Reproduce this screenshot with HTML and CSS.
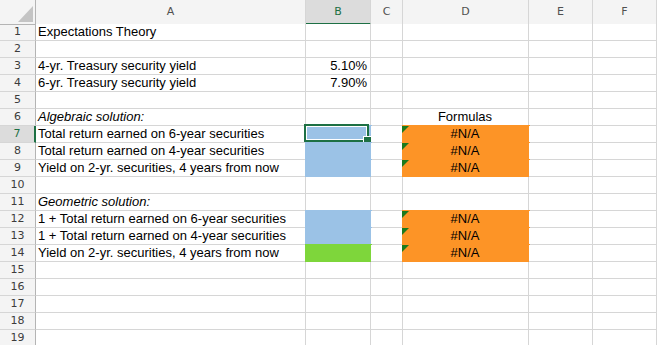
FILE: index.html
```html
<!DOCTYPE html>
<html lang="en">
<head>
    <meta charset="UTF-8">
    <meta name="viewport" content="width=device-width, initial-scale=1.0">
    <title>Expectations Theory</title>
    <link rel="stylesheet" href="styles.css">
</head>
<body>
    <div class="sheet">
        <div class="row head">
            <div class="corner"><span class="corner-mark"></span></div>
            <div class="col">A</div>
            <div class="col active">B</div>
            <div class="col">C</div>
            <div class="col">D</div>
            <div class="col">E</div>
            <div class="col">F</div>
        </div>
        <div class="row">
            <div class="num">1</div>
            <div class="cell">Expectations Theory</div>
            <div class="cell"></div><div class="cell"></div><div class="cell"></div><div class="cell"></div><div class="cell"></div>
        </div>
        <div class="row">
            <div class="num">2</div>
            <div class="cell"></div><div class="cell"></div><div class="cell"></div><div class="cell"></div><div class="cell"></div><div class="cell"></div>
        </div>
        <div class="row">
            <div class="num">3</div>
            <div class="cell">4-yr. Treasury security yield</div>
            <div class="cell right">5.10%</div>
            <div class="cell"></div><div class="cell"></div><div class="cell"></div><div class="cell"></div>
        </div>
        <div class="row">
            <div class="num">4</div>
            <div class="cell">6-yr. Treasury security yield</div>
            <div class="cell right">7.90%</div>
            <div class="cell"></div><div class="cell"></div><div class="cell"></div><div class="cell"></div>
        </div>
        <div class="row">
            <div class="num">5</div>
            <div class="cell"></div><div class="cell"></div><div class="cell"></div><div class="cell"></div><div class="cell"></div><div class="cell"></div>
        </div>
        <div class="row">
            <div class="num">6</div>
            <div class="cell italic">Algebraic solution:</div>
            <div class="cell"></div><div class="cell"></div>
            <div class="cell center">Formulas</div>
            <div class="cell"></div><div class="cell"></div>
        </div>
        <div class="row">
            <div class="num active">7</div>
            <div class="cell">Total return earned on 6-year securities</div>
            <div class="cell fill blue selected"></div>
            <div class="cell"></div>
            <div class="cell fill orange flag center">#N/A</div>
            <div class="cell"></div><div class="cell"></div>
        </div>
        <div class="row">
            <div class="num">8</div>
            <div class="cell">Total return earned on 4-year securities</div>
            <div class="cell fill blue"></div>
            <div class="cell"></div>
            <div class="cell fill orange flag center">#N/A</div>
            <div class="cell"></div><div class="cell"></div>
        </div>
        <div class="row">
            <div class="num">9</div>
            <div class="cell">Yield on 2-yr. securities, 4 years from now</div>
            <div class="cell fill blue"></div>
            <div class="cell"></div>
            <div class="cell fill orange flag center">#N/A</div>
            <div class="cell"></div><div class="cell"></div>
        </div>
        <div class="row">
            <div class="num">10</div>
            <div class="cell"></div><div class="cell"></div><div class="cell"></div><div class="cell"></div><div class="cell"></div><div class="cell"></div>
        </div>
        <div class="row">
            <div class="num">11</div>
            <div class="cell italic">Geometric solution:</div>
            <div class="cell"></div><div class="cell"></div><div class="cell"></div><div class="cell"></div><div class="cell"></div>
        </div>
        <div class="row">
            <div class="num">12</div>
            <div class="cell">1 + Total return earned on 6-year securities</div>
            <div class="cell fill blue"></div>
            <div class="cell"></div>
            <div class="cell fill orange flag center">#N/A</div>
            <div class="cell"></div><div class="cell"></div>
        </div>
        <div class="row">
            <div class="num">13</div>
            <div class="cell">1 + Total return earned on 4-year securities</div>
            <div class="cell fill blue"></div>
            <div class="cell"></div>
            <div class="cell fill orange flag center">#N/A</div>
            <div class="cell"></div><div class="cell"></div>
        </div>
        <div class="row">
            <div class="num">14</div>
            <div class="cell">Yield on 2-yr. securities, 4 years from now</div>
            <div class="cell fill green"></div>
            <div class="cell"></div>
            <div class="cell fill orange flag center">#N/A</div>
            <div class="cell"></div><div class="cell"></div>
        </div>
        <div class="row">
            <div class="num">15</div>
            <div class="cell"></div><div class="cell"></div><div class="cell"></div><div class="cell"></div><div class="cell"></div><div class="cell"></div>
        </div>
        <div class="row">
            <div class="num">16</div>
            <div class="cell"></div><div class="cell"></div><div class="cell"></div><div class="cell"></div><div class="cell"></div><div class="cell"></div>
        </div>
        <div class="row">
            <div class="num">17</div>
            <div class="cell"></div><div class="cell"></div><div class="cell"></div><div class="cell"></div><div class="cell"></div><div class="cell"></div>
        </div>
        <div class="row">
            <div class="num">18</div>
            <div class="cell"></div><div class="cell"></div><div class="cell"></div><div class="cell"></div><div class="cell"></div><div class="cell"></div>
        </div>
        <div class="row">
            <div class="num">19</div>
            <div class="cell"></div><div class="cell"></div><div class="cell"></div><div class="cell"></div><div class="cell"></div><div class="cell"></div>
        </div>
    </div>
</body>
</html>
```

FILE: styles.css
```css
:root {
    --grid-color: #d6d6d6;
    --head-line: #b4b4b4;
    --head-bg: #f4f4f4;
    --head-active: #dcdcdc;
    --select-color: #1d7044;
    --blue-fill: #9bc2e6;
    --green-fill: #7ed63b;
    --orange-fill: #fd9426;
    --flag-color: #1c7a1c;
}

* {
    margin: 0;
    padding: 0;
    box-sizing: border-box;
}

body {
    font-family: 'Liberation Sans', Arial, sans-serif;
    font-size: 13px;
    color: #000000;
    background-color: #ffffff;
    overflow: hidden;
}

.sheet {
    width: 657px;
}

.row {
    display: grid;
    grid-template-columns: 36px 270px 65px 32px 126px 64px 64px;
    height: 17px;
}

.row.head {
    height: 24px;
}

/* headers */
.corner,
.col {
    position: relative;
    background-color: var(--head-bg);
    border-right: 1px solid var(--grid-color);
    border-bottom: 1px solid var(--head-line);
}

.corner {
    border-right-color: var(--head-line);
}

.corner-mark {
    position: absolute;
    right: 2px;
    bottom: 2px;
    width: 0;
    height: 0;
    border-left: 15px solid transparent;
    border-bottom: 16px solid #c4c4c4;
}

.col {
    font-family: 'DejaVu Sans', sans-serif;
    font-size: 11px;
    color: #505050;
    text-align: center;
    line-height: 23px;
}

.col.active {
    background-color: var(--head-active);
    border-bottom: 2px solid var(--select-color);
    color: var(--select-color);
}

.num {
    font-family: 'DejaVu Sans', sans-serif;
    font-size: 11px;
    color: #3c3c3c;
    text-align: center;
    line-height: 16px;
    background-color: var(--head-bg);
    border-right: 1px solid var(--head-line);
    border-bottom: 1px solid var(--grid-color);
}

.num.active {
    background-color: var(--head-active);
    border-right: 2px solid var(--select-color);
    color: var(--select-color);
}

/* cells */
.cell {
    position: relative;
    background-color: #ffffff;
    border-right: 1px solid var(--grid-color);
    border-bottom: 1px solid var(--grid-color);
    padding: 0 3px 0 2px;
    line-height: 16px;
    white-space: nowrap;
    overflow: visible;
}

.right {
    text-align: right;
}

.center {
    text-align: center;
}

.italic {
    font-style: italic;
}

.fill.blue {
    background-color: var(--blue-fill);
    border-color: var(--blue-fill);
    box-shadow: 0 0 0 1px var(--blue-fill);
}

.fill.green {
    background-color: var(--green-fill);
    border-color: var(--green-fill);
    box-shadow: 0 0 0 1px var(--green-fill);
}

.fill.orange {
    background-color: var(--orange-fill);
    border-color: var(--orange-fill);
    box-shadow: 0 0 0 1px var(--orange-fill);
}

.flag::before {
    content: '';
    position: absolute;
    left: -1px;
    top: 0;
    width: 0;
    height: 0;
    border-top: 7px solid var(--flag-color);
    border-right: 7px solid transparent;
}

.selected::before {
    content: '';
    position: absolute;
    left: -2px;
    top: -2px;
    right: 1px;
    bottom: 0;
    border: 2px solid var(--select-color);
    box-shadow: inset 0 0 0 1px #ffffff;
}

.selected::after {
    content: '';
    position: absolute;
    right: -2px;
    bottom: -3px;
    width: 7px;
    height: 7px;
    background-color: var(--select-color);
    border: 1px solid #ffffff;
}
```
